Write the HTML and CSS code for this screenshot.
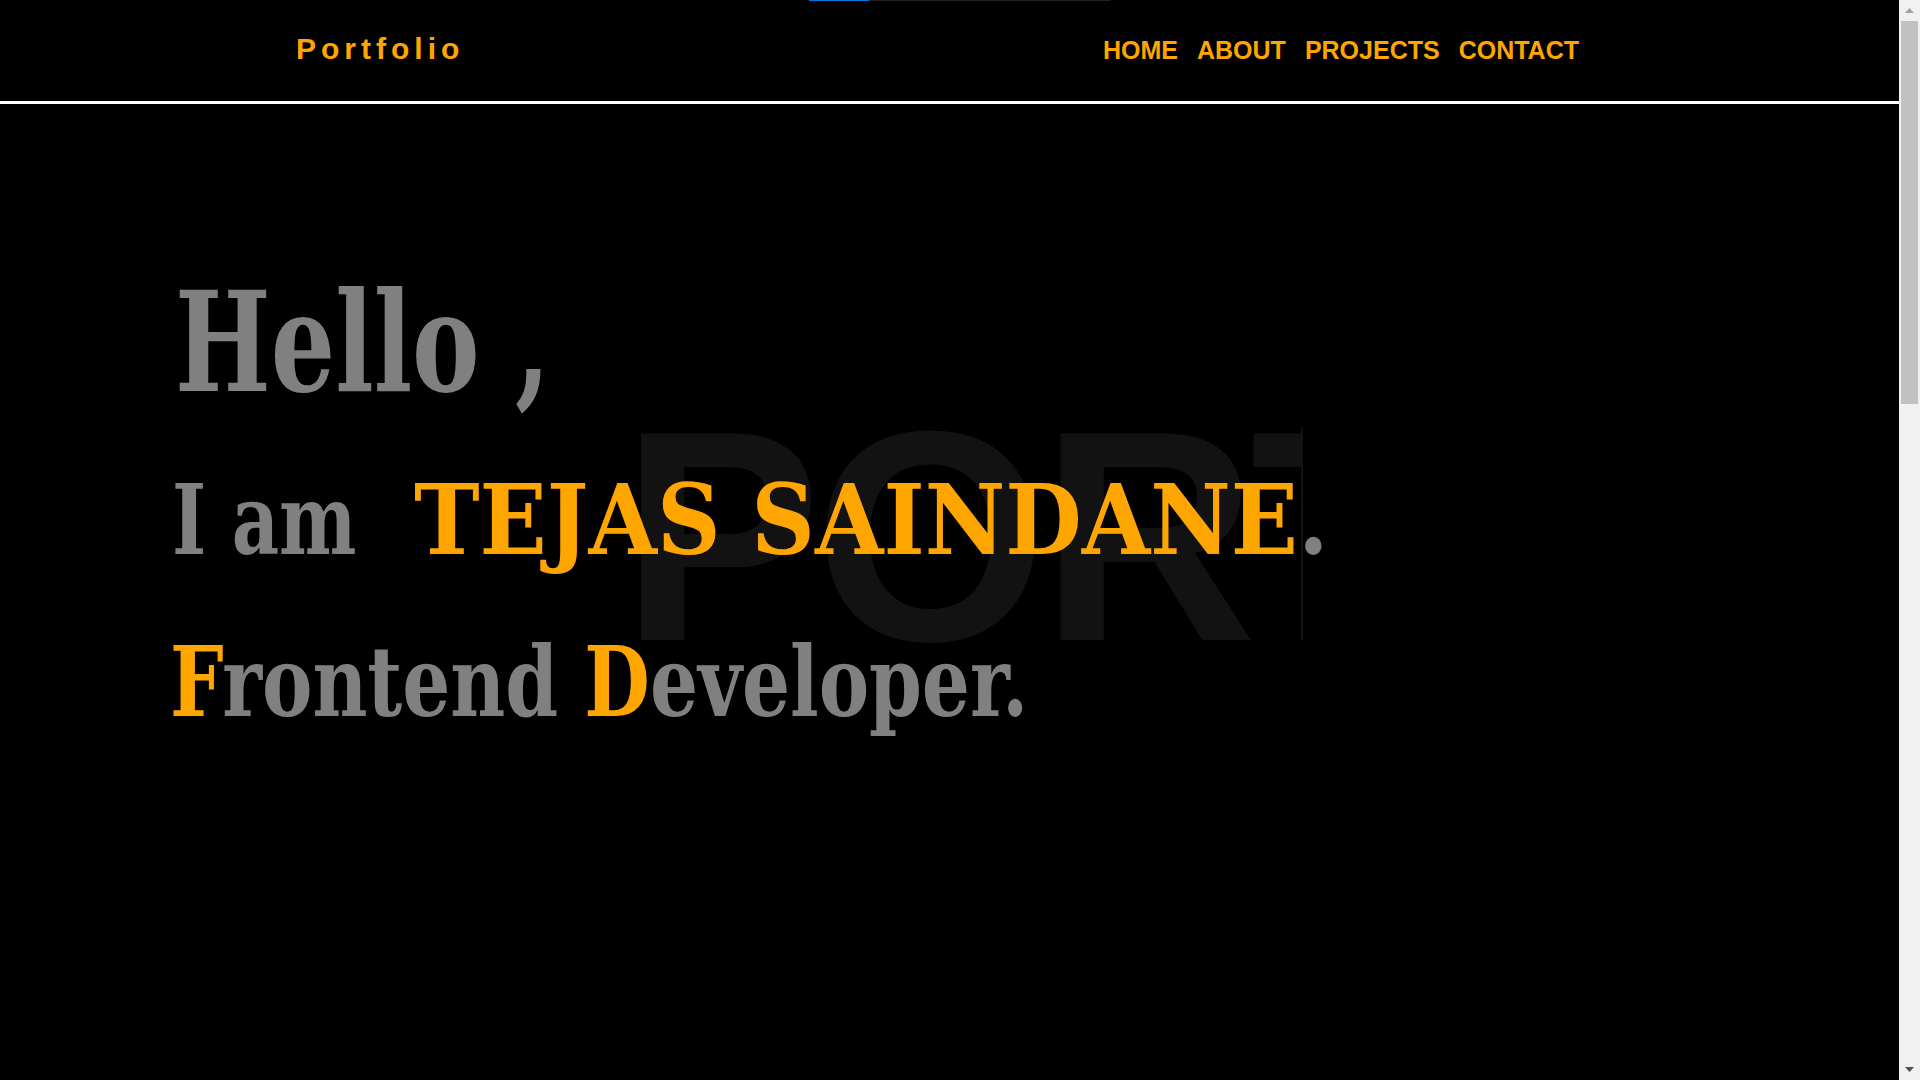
FILE: index.html
```html
<!DOCTYPE html>
<html lang="en">
<head>
<meta charset="utf-8">
<title>Portfolio</title>
<link rel="stylesheet" href="styles.css">
</head>
<body>
<div class="loader"><span class="loader-fill"></span></div>
<header class="site-header">
  <a class="brand" href="#">Portfolio</a>
  <nav class="nav">
    <a href="#home">HOME</a>
    <a href="#about">ABOUT</a>
    <a href="#projects">PROJECTS</a>
    <a href="#contact">CONTACT</a>
  </nav>
</header>
<main>
  <section class="hero" id="home">
    <div class="bg-word" aria-hidden="true">PORTFOLIO</div>
    <h1 class="hello">Hello ,</h1>
    <p class="line intro"><span class="lead">I am</span><span class="name">TEJAS SAINDANE</span>.</p>
    <p class="line role"><span class="accent">F</span>rontend <span class="accent">D</span>eveloper.</p>
  </section>
  <section class="section-block" id="about"></section>
  <section class="section-block" id="projects"></section>
  <section class="section-block" id="contact"></section>
</main>
<div class="scrollbar" aria-hidden="true">
  <div class="sb-btn">
    <svg width="9" height="5" viewBox="0 0 9 5"><path d="M0 5 L4.5 0 L9 5 Z" fill="#a3a3a3"/></svg>
  </div>
  <div class="sb-track"><div class="sb-thumb"></div></div>
  <div class="sb-btn">
    <svg width="9" height="5" viewBox="0 0 9 5"><path d="M0 0 L4.5 5 L9 0 Z" fill="#505050"/></svg>
  </div>
</div>
</body>
</html>
```
FILE: styles.css
```css
html { background: #000; }
body {
  margin: 0;
  background: #000;
  font-family: "Liberation Sans", Arial, sans-serif;
}

/* drawn scrollbar overlay */
.scrollbar {
  position: fixed;
  top: 0;
  right: 0;
  width: 21px;
  height: 100vh;
  background: #f1f1f1;
  display: flex;
  flex-direction: column;
  z-index: 10;
}
.sb-btn {
  height: 21px;
  display: flex;
  align-items: center;
  justify-content: center;
  flex: none;
}
.sb-track {
  flex: 1;
  padding: 0 2px;
}
.sb-thumb {
  height: 383px;
  background: #c1c1c1;
}

.loader {
  position: absolute;
  top: 0;
  left: 809px;
  width: 301px;
  height: 1px;
  background: #222;
  z-index: 5;
}
.loader-fill {
  display: block;
  width: 60px;
  height: 1px;
  background: #0a78d7;
}

.site-header {
  display: flex;
  align-items: center;
  height: 101px;
  padding: 0 341px 0 296px;
  border-bottom: 3px solid #fff;
}
.brand {
  color: #ffa500;
  text-decoration: none;
  font-weight: bold;
  font-size: 30px;
  letter-spacing: 5px;
  line-height: 34px;
  margin-top: -4px;
}
.nav {
  margin-left: auto;
  margin-top: -2px;
  display: flex;
  gap: 19px;
}
.nav a {
  color: #ffa500;
  text-decoration: none;
  font-weight: bold;
  font-size: 25px;
  line-height: 28px;
}

.hero {
  position: relative;
  height: 976px;
  box-sizing: border-box;
  padding: 141px 0 0 172px;
  font-family: "DejaVu Serif Condensed", "DejaVu Serif", serif;
  font-weight: bold;
  color: #808080;
}
.bg-word {
  position: absolute;
  left: 621px;
  top: 282px;
  width: 682px;
  overflow: hidden;
  white-space: nowrap;
  font-family: "Liberation Sans", Arial, sans-serif;
  font-weight: bold;
  font-size: 300px;
  line-height: 300px;
  letter-spacing: -7px;
  color: #121212;
}
.bg-word::after {
  content: "";
  position: absolute;
  right: 0;
  top: 41px;
  width: 2px;
  height: 213px;
  background: #121212;
}
.hello {
  position: relative;
  margin: 0 0 0 3px;
  font-size: 139px;
  line-height: 194px;
  font-weight: bold;
  white-space: nowrap;
  transform: scaleX(0.81);
  transform-origin: left center;
}
.line {
  position: relative;
  margin: 0;
  font-size: 98px;
  line-height: 162px;
  white-space: nowrap;
}
.lead {
  display: inline-block;
  width: 242px;
  transform: scaleX(0.83);
  transform-origin: left center;
}
.role {
  transform: scaleX(0.857);
  transform-origin: left center;
  margin-left: -2px;
}
.name { color: #ffa500; }
.accent { color: #ffa500; }
.section-block { height: 616px; }
#contact { height: 615px; }
```
